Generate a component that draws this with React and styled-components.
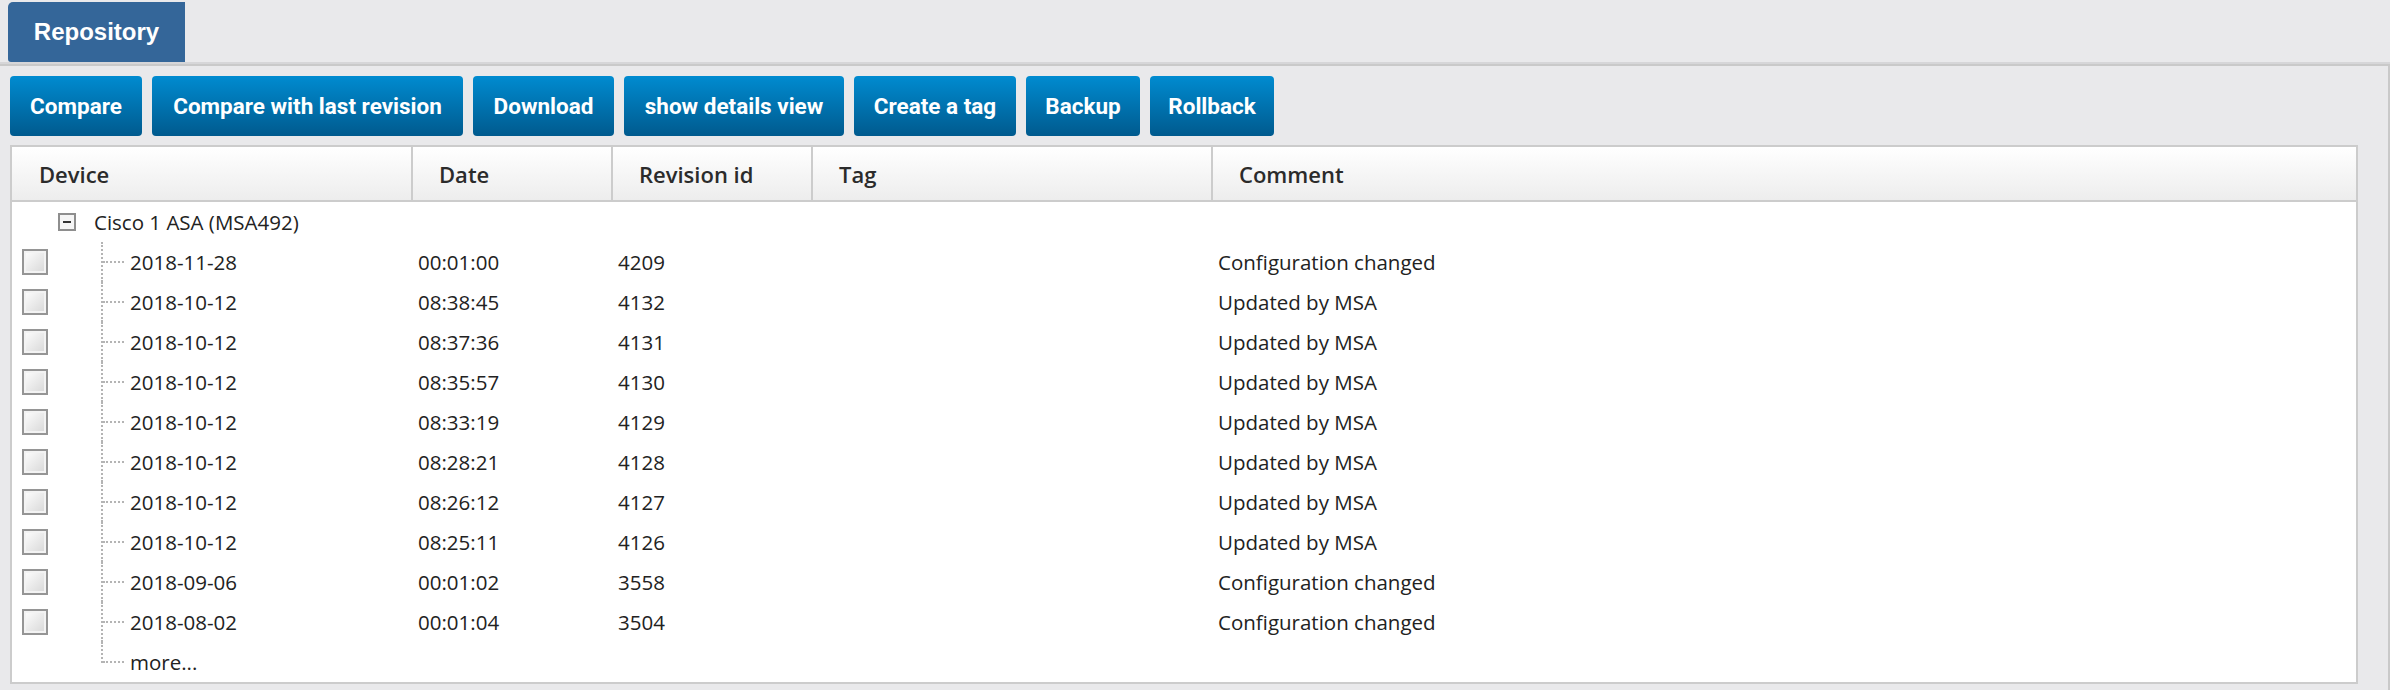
import styled, { createGlobalStyle } from "styled-components";

const GlobalStyle = createGlobalStyle`
  body {
    margin: 0;
    background: #e9e9eb;
    font-family: "Open Sans", "Liberation Sans", sans-serif;
    color: #222;
  }
`;

const TabStrip = styled.div`
  height: 60px;
  padding: 2px 0 0 8px;
  display: flex;
  align-items: flex-end;
  border-bottom: 2px solid #d6d6d8;
`;

const Tab = styled.div`
  width: 177px;
  height: 60px;
  display: flex;
  align-items: center;
  justify-content: center;
  background: #346699;
  color: #fff;
  font-family: "Liberation Sans", Arial, sans-serif;
  font-weight: bold;
  font-size: 24px;
  border-radius: 5px 0 0 3px;
`;

const Panel = styled.div`
  border-top: 2px solid #c9c9c9;
  border-right: 2px solid #c9c9c9;
  padding: 10px 30px 6px 10px;
`;

const Toolbar = styled.div`
  display: flex;
  gap: 10px;
  margin-bottom: 9px;
`;

const Button = styled.button`
  width: ${(p) => p.$w}px;
  height: 60px;
  padding: 0;
  border: 0;
  border-radius: 4px;
  background: linear-gradient(#008bd0, #005a8e);
  color: #fff;
  font-family: Roboto, "Open Sans", sans-serif;
  font-weight: 700;
  font-size: 22.5px;
  cursor: pointer;
`;

const Table = styled.div`
  border: 2px solid #cccccc;
  background: #fff;
`;

const cols = "399px 200px 200px 400px 1fr";

const HeaderRow = styled.div`
  display: grid;
  grid-template-columns: ${cols};
  height: 53px;
  background: linear-gradient(#ffffff, #ededed);
  border-bottom: 2px solid #cccccc;
`;

const HeadCell = styled.div`
  display: flex;
  align-items: center;
  padding-left: ${(p) => (p.$first ? "27px" : "26px")};
  border-left: ${(p) => (p.$first ? "none" : "2px solid #cccccc")};
  font-weight: 600;
  font-size: 22px;
  color: #2b2b2b;
`;

const Row = styled.div`
  display: grid;
  grid-template-columns: ${cols};
  height: 40px;
  font-size: 20.5px;
`;

const Cell = styled.div`
  display: flex;
  align-items: center;
  padding-left: 7px;
`;

const TreeCell = styled.div`
  display: flex;
  align-items: center;
  padding-left: ${(p) => p.$pad || "10px"};
`;

const Checkbox = styled.span`
  box-sizing: border-box;
  width: 26px;
  height: 26px;
  border: 2px solid #959595;
  background: linear-gradient(135deg, #ffffff, #d6d6d6);
  box-shadow: inset 0 0 0 2px #f3f3f3;
`;

const Spacer = styled.span`
  width: 26px;
`;

const Toggle = styled.span`
  box-sizing: border-box;
  width: 18px;
  height: 18px;
  border: 2px solid #8e8e8e;
  background: #f5f5f5;
  display: flex;
  align-items: center;
  justify-content: center;
  margin-right: 18px;

  &::after {
    content: "";
    width: 8px;
    height: 2px;
    background: #333;
  }
`;

const Connector = styled.span`
  box-sizing: border-box;
  align-self: flex-start;
  height: ${(p) => (p.$last ? "21px" : "40px")};
  margin-left: 53px;
  border-left: 2px dotted #b4b4b4;
  display: flex;
  align-items: ${(p) => (p.$last ? "flex-end" : "center")};
`;

const Dots = styled.span`
  width: 21px;
  border-top: 2px dotted #b4b4b4;
`;

const NodeText = styled.span`
  margin-left: 6px;
`;

const buttons = [
  ["Compare", 132],
  ["Compare with last revision", 311],
  ["Download", 141],
  ["show details view", 220],
  ["Create a tag", 162],
  ["Backup", 114],
  ["Rollback", 124],
];

const revisions = [
  ["2018-11-28", "00:01:00", "4209", "Configuration changed"],
  ["2018-10-12", "08:38:45", "4132", "Updated by MSA"],
  ["2018-10-12", "08:37:36", "4131", "Updated by MSA"],
  ["2018-10-12", "08:35:57", "4130", "Updated by MSA"],
  ["2018-10-12", "08:33:19", "4129", "Updated by MSA"],
  ["2018-10-12", "08:28:21", "4128", "Updated by MSA"],
  ["2018-10-12", "08:26:12", "4127", "Updated by MSA"],
  ["2018-10-12", "08:25:11", "4126", "Updated by MSA"],
  ["2018-09-06", "00:01:02", "3558", "Configuration changed"],
  ["2018-08-02", "00:01:04", "3504", "Configuration changed"],
];

const App = () => {
  return (
    <>
      <GlobalStyle />
      <TabStrip>
        <Tab>Repository</Tab>
      </TabStrip>
      <Panel>
        <Toolbar>
          {buttons.map(([label, w]) => (
            <Button key={label} $w={w}>
              {label}
            </Button>
          ))}
        </Toolbar>
        <Table>
          <HeaderRow>
            <HeadCell $first>Device</HeadCell>
            <HeadCell>Date</HeadCell>
            <HeadCell>Revision id</HeadCell>
            <HeadCell>Tag</HeadCell>
            <HeadCell>Comment</HeadCell>
          </HeaderRow>
          <Row>
            <TreeCell $pad="46px">
              <Toggle />
              Cisco 1 ASA (MSA492)
            </TreeCell>
          </Row>
          {revisions.map(([date, time, id, comment]) => (
            <Row key={id}>
              <TreeCell>
                <Checkbox />
                <Connector>
                  <Dots />
                </Connector>
                <NodeText>{date}</NodeText>
              </TreeCell>
              <Cell>{time}</Cell>
              <Cell>{id}</Cell>
              <Cell />
              <Cell>{comment}</Cell>
            </Row>
          ))}
          <Row>
            <TreeCell>
              <Spacer />
              <Connector $last>
                <Dots />
              </Connector>
              <NodeText>more...</NodeText>
            </TreeCell>
          </Row>
        </Table>
      </Panel>
    </>
  );
};

export default App;
